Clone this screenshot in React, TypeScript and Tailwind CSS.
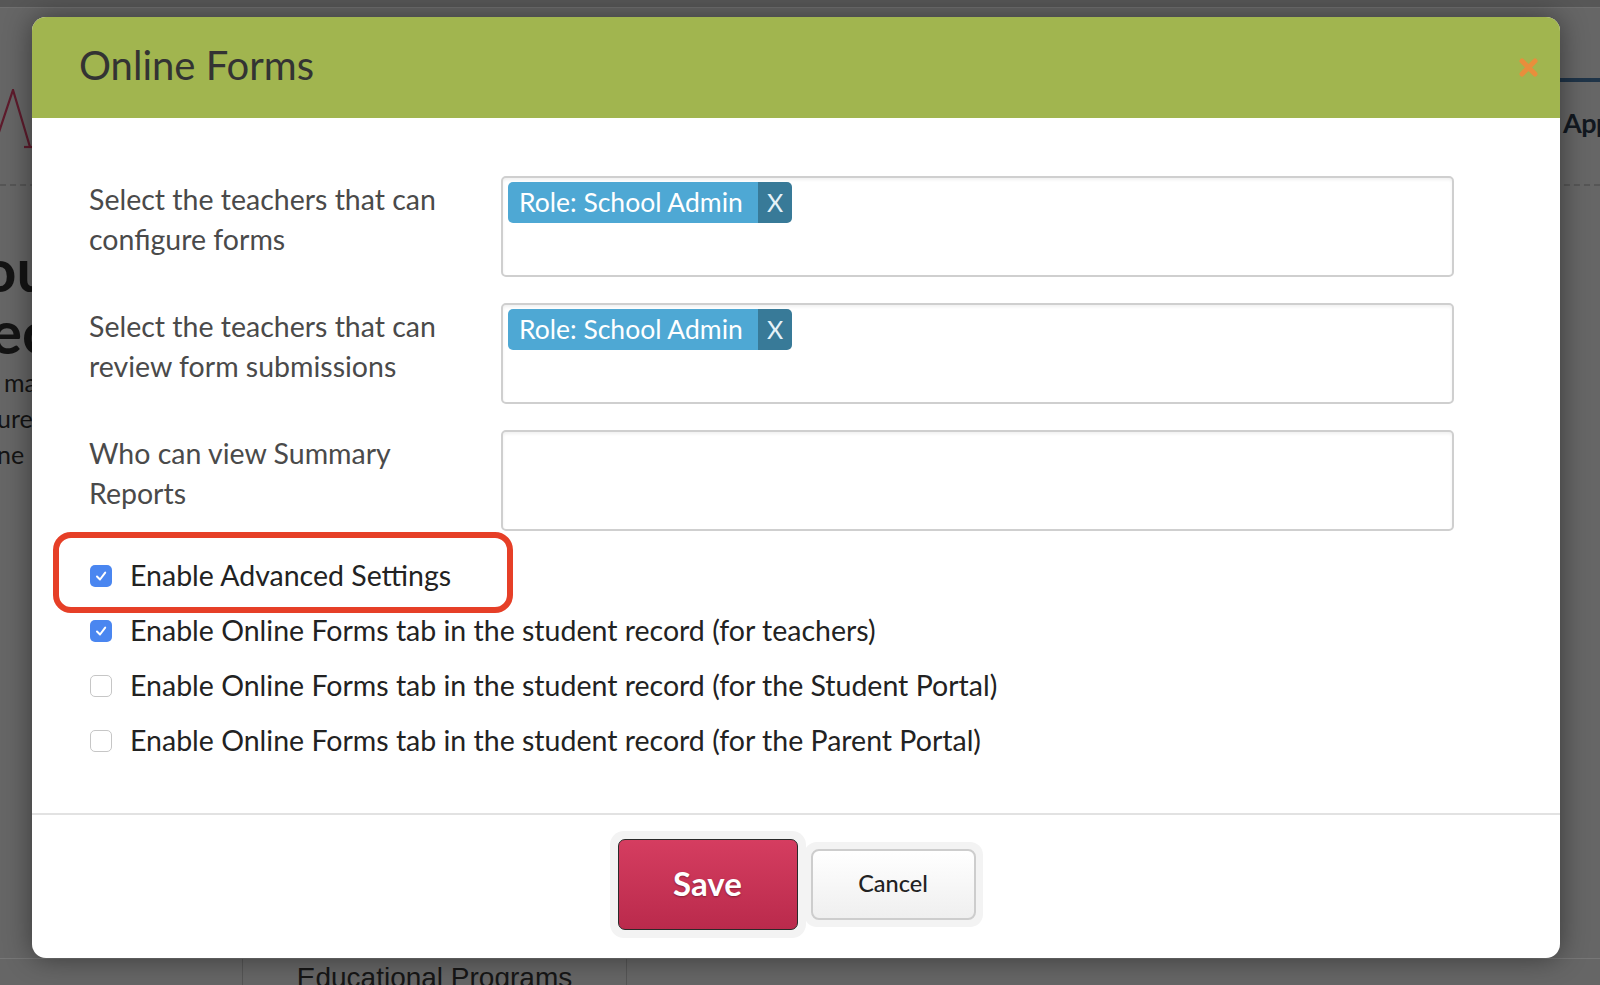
import React from "react";

function Check({ checked }: { checked: boolean }) {
  if (checked) {
    return (
      <div className="w-[22px] h-[22px] rounded-[5px] bg-[#4a86f0] flex items-center justify-center shrink-0">
        <svg width="14" height="14" viewBox="0 0 14 14" fill="none">
          <path d="M3 7.5 L6 10.5 L11.2 3.6" stroke="white" strokeWidth="2" strokeLinecap="round" strokeLinejoin="round" />
        </svg>
      </div>
    );
  }
  return <div className="w-[22px] h-[22px] rounded-[5px] bg-white border-[1.5px] border-[#c6c6c6] shrink-0" />;
}

function Chip() {
  return (
    <div className="flex h-[41px] rounded-[5px] overflow-hidden">
      <div className="w-[250px] bg-[#4ea8d4] text-white text-[26.5px] leading-[41px] pl-[11px] whitespace-nowrap">
        Role: School Admin
      </div>
      <div className="w-[34px] bg-[#387a98] text-[#e6f2f8] text-[25px] leading-[41px] text-center">X</div>
    </div>
  );
}

function FieldRow({ label, chip }: { label: React.ReactNode; chip: boolean }) {
  return (
    <div className="flex mb-[26px]">
      <div className="w-[412px] pt-[3px] text-[28.5px] leading-[40px] text-[#4a4a4a] whitespace-nowrap">{label}</div>
      <div className="w-[953px] h-[101px] border-2 border-[#cfcfcf] rounded-[5px] bg-white shadow-[inset_0_2px_3px_rgba(0,0,0,0.06)] pl-[5px] pt-[4px]">
        {chip && (
          <div className="inline-block">
            <Chip />
          </div>
        )}
      </div>
    </div>
  );
}

function OptionRow({ checked, text, children }: { checked: boolean; text: string; children?: React.ReactNode }) {
  return (
    <div className="relative flex items-center h-[55px] pl-[1px]">
      {children}
      <Check checked={checked} />
      <span className="ml-[18px] text-[28.5px] text-[#222] whitespace-nowrap">{text}</span>
    </div>
  );
}

export default function App() {
  return (
    <div className="relative w-[1600px] h-[985px] overflow-hidden bg-[#666666] font-['Lato',sans-serif]">
      {/* page behind the overlay */}
      <div className="flex flex-col h-full">
        <div className="h-[8px] bg-[#575757] border-b border-[#707070]" />
        <div className="h-[178px] flex justify-between border-b-2 border-dashed border-[#565656]">
          <div className="pt-[81px]">
            <svg width="40" height="62" viewBox="0 0 40 62" fill="none">
              <path d="M-6 58 L13 1 L30 58" stroke="#5e1b2c" strokeWidth="2.2" />
              <path d="M24 58 L36 58" stroke="#5e1b2c" strokeWidth="2.2" />
            </svg>
          </div>
          <div className="w-[40px] flex flex-col">
            <div className="mt-[70px] h-[4px] bg-[#1f3448]" />
            <div className="mt-[27px] text-[27px] font-bold text-[#121820] leading-none whitespace-nowrap pl-[3px] tracking-[-0.5px]">App</div>
          </div>
        </div>
        <div className="flex flex-col pt-[52px] text-[#141414]">
          <div className="text-[60px] font-bold leading-[62px] ml-[-18px] whitespace-nowrap">ou</div>
          <div className="text-[60px] font-bold leading-[62px] ml-[-10px] whitespace-nowrap">ec</div>
          <div className="text-[25px] leading-[36px] ml-[4px] mt-[2px] whitespace-nowrap">ma</div>
          <div className="text-[25px] leading-[36px] ml-[-3px] whitespace-nowrap">ure</div>
          <div className="text-[25px] leading-[36px] ml-[-3px] whitespace-nowrap">ne</div>
        </div>
        <div className="mt-auto h-[27px] flex border-t border-[#777]">
          <div className="w-[243px] border-r border-[#555]" />
          <div className="w-[384px] border-r border-[#555] text-center font-['Liberation_Sans',sans-serif] text-[28px] leading-[38px] text-[#161616] whitespace-nowrap">
            Educational Programs
          </div>
        </div>
      </div>

      {/* modal */}
      <div className="absolute left-[32px] top-[17px] w-[1528px] h-[941px] rounded-[14px] bg-white overflow-hidden flex flex-col shadow-[0_0_28px_rgba(0,0,0,0.45)]">
        <div className="h-[101px] shrink-0 bg-[#a1b54f] flex items-center justify-between pl-[47px] pr-[22px]">
          <div className="text-[40px] text-[#333] leading-none pb-[5px]">Online Forms</div>
          <svg width="19" height="19" viewBox="0 0 19 19" fill="none">
            <path d="M3 3 L16 16 M16 3 L3 16" stroke="#e88e3c" strokeWidth="5" strokeLinecap="round" />
          </svg>
        </div>

        <div className="flex-1 flex flex-col pt-[58px] pl-[57px]">
          <FieldRow
            chip
            label={
              <>
                Select the teachers that can
                <br />
                configure forms
              </>
            }
          />
          <FieldRow
            chip
            label={
              <>
                Select the teachers that can
                <br />
                review form submissions
              </>
            }
          />
          <FieldRow
            chip={false}
            label={
              <>
                Who can view Summary
                <br />
                Reports
              </>
            }
          />
          <div className="mt-[-9px] flex flex-col">
            <OptionRow checked text="Enable Advanced Settings">
              <div className="absolute left-[-36px] top-[-16px] w-[460px] h-[81px] border-[6px] border-[#e63f27] rounded-[18px] pointer-events-none" />
            </OptionRow>
            <OptionRow checked text="Enable Online Forms tab in the student record (for teachers)" />
            <OptionRow checked={false} text="Enable Online Forms tab in the student record (for the Student Portal)" />
            <OptionRow checked={false} text="Enable Online Forms tab in the student record (for the Parent Portal)" />
          </div>
        </div>

        <div className="h-[145px] shrink-0 border-t-2 border-[#e2e2e2] flex justify-center items-center pb-[5px]">
          <div className="p-[8px] bg-[#f3f3f3] rounded-[14px]">
            <div className="w-[180px] h-[91px] rounded-[7px] border-[1.5px] border-[#2a2a2a] bg-gradient-to-b from-[#d53d60] to-[#ba2a4c] flex items-center justify-center">
              <span className="text-white text-[33px] font-bold [text-shadow:0_1px_2px_rgba(0,0,0,0.35)]">Save</span>
            </div>
          </div>
          <div className="ml-[-2px] p-[7px] bg-[#f3f3f3] rounded-[13px]">
            <div className="w-[165px] h-[71px] rounded-[8px] border-2 border-[#cdcdcd] bg-gradient-to-b from-[#ffffff] to-[#efefef] flex items-center justify-center">
              <span className="text-[#222] text-[23.5px] font-medium">Cancel</span>
            </div>
          </div>
        </div>
      </div>
    </div>
  );
}
